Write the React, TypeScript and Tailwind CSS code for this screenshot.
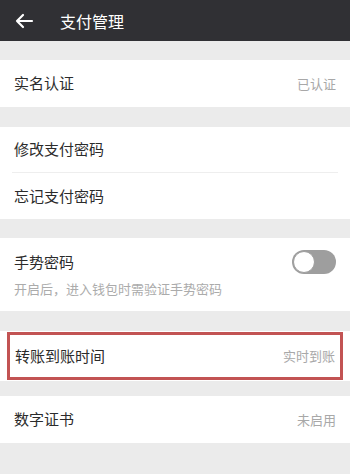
import React, { useState } from 'react';

const Row = ({ label, value }: { label: string; value?: string }) => (
  <div className="flex items-center justify-between h-full px-[14px]">
    <span className="text-[15px] text-[#2b2b2b]">{label}</span>
    {value && <span className="text-[13px] text-[#a8a8a8]">{value}</span>}
  </div>
);

const App = () => {
  const [gesture, setGesture] = useState(false);

  return (
    <div
      className="w-[350px] h-[474px] bg-[#ebebeb] overflow-hidden"
      style={{ fontFamily: '"Noto Sans CJK SC", "Noto Sans", sans-serif' }}
    >
      {/* 顶部导航 */}
      <div className="h-[41px] bg-[#303034] flex items-center">
        <svg width="20" height="16" viewBox="0 0 20 16" className="ml-[14px]">
          <path d="M18 8H3M9 2L3 8l6 6" stroke="#fff" strokeWidth="2.2" fill="none" strokeLinecap="round" strokeLinejoin="round" />
        </svg>
        <span className="ml-[26px] text-[16px] text-white">支付管理</span>
      </div>

      <div className="mt-[19px] h-[47px] bg-white">
        <Row label="实名认证" value="已认证" />
      </div>

      <div className="mt-[20px] bg-white">
        <div className="h-[45px]">
          <Row label="修改支付密码" />
        </div>
        <div className="mx-[12px] h-px bg-[#eeeeee]"></div>
        <div className="h-[46px]">
          <Row label="忘记支付密码" />
        </div>
      </div>

      <div className="mt-[19px] h-[73px] bg-white px-[14px] pt-[12px]">
        <div className="flex items-center justify-between">
          <span className="text-[15px] text-[#2b2b2b]">手势密码</span>
          <button
            onClick={() => setGesture(!gesture)}
            className={`w-[44px] h-[24px] rounded-full flex items-center p-[1px] ${gesture ? 'bg-[#4cd964] justify-end' : 'bg-[#9e9e9e] justify-start'}`}
          >
            <span className="w-[22px] h-[22px] rounded-full bg-white border border-[#9e9e9e]"></span>
          </button>
        </div>
        <div className="mt-[5px] text-[13px] text-[#ababab]">开启后，进入钱包时需验证手势密码</div>
      </div>

      {/* 高亮行 */}
      <div className="mt-[20px] h-[50px] bg-white px-[7px] py-[1px]">
        <div className="h-full border-[3px] border-[#c25353] flex items-center justify-between pl-[5px] pr-[5px]">
          <span className="text-[15px] text-[#2b2b2b]">转账到账时间</span>
          <span className="text-[13px] text-[#a8a8a8]">实时到账</span>
        </div>
      </div>

      <div className="mt-[15px] h-[47px] bg-white">
        <Row label="数字证书" value="未启用" />
      </div>
    </div>
  );
};

export default App;
